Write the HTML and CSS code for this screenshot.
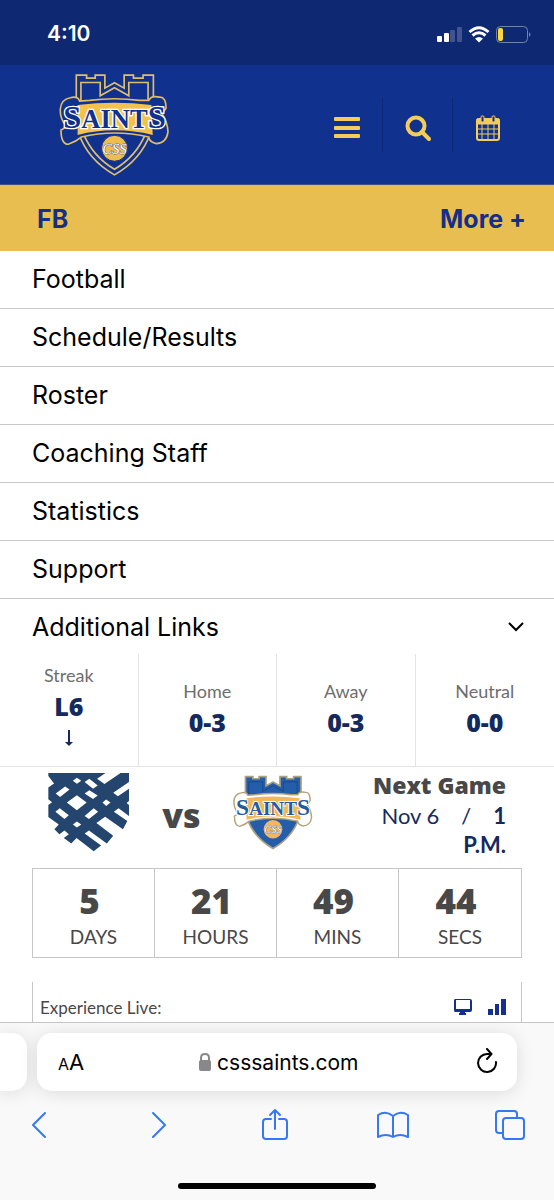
FILE: index.html
```
<!DOCTYPE html>
<html lang="en">
<head>
    <meta charset="UTF-8">
    <meta name="viewport" content="width=device-width, initial-scale=1.0">
    <title>Football - CSS Saints</title>
    <link rel="stylesheet" href="styles.css">
</head>
<body>

    <div class="status-bar">
        <span class="clock">4:10</span>
        <svg class="status-icons" width="96" height="20" viewBox="0 0 96 20">
            <rect x="1" y="12" width="5" height="6" rx="1" fill="#fff"/>
            <rect x="8" y="9" width="5" height="9" rx="1" fill="#fff"/>
            <rect x="14" y="6" width="5" height="12" rx="1" fill="#42548f"/>
            <rect x="21" y="3" width="5" height="15" rx="1" fill="#42548f"/>
            <path d="M33.500 8 Q43 -0.500 52.500 8 M36.500 11.500 Q43 6 49.500 11.500" fill="none" stroke="#fff" stroke-width="3"/>
            <path d="M39 14.500 Q43 11.500 47 14.500 L43 18.500 Z" fill="#fff"/>
            <rect x="60.500" y="2.500" width="31" height="16" rx="4" fill="none" stroke="#7482b0"/>
            <rect x="62" y="4" width="5" height="13" rx="2" fill="#fbd73c"/>
            <path d="M93 8 Q96 10.500 93 13 Z" fill="#7482b0"/>
        </svg>
    </div>

    <header class="site-header">
        <a href="#" class="logo" aria-label="Saints home">
            <svg width="111" height="104" viewBox="28 24 334 312">
                <path d="M80 110 V30 H111 V39 H137 V30 H166 V69 L195 53 L224 69 V30 H252 V39 H281 V30 H312 V110 M94 110 V52 H152 V92 L195 68 L238 92 V52 H296 V110 M87 205 Q115 285 195 330 Q275 285 303 205 M101 205 Q130 275 195 313 Q260 275 289 205" fill="none" stroke="#dfbf6f" stroke-width="5"/>
                <path d="M62 98 Q84 92 90 108 L120 106 Q195 96 270 106 L298 106 Q305 90 330 96 Q350 94 350 130 Q342 142 338 146 Q354 170 356 200 Q352 235 320 236 Q300 232 298 216 Q195 192 96 216 Q80 230 56 238 Q34 238 34 195 Q48 188 50 184 Q30 160 32 132 Q34 103 62 98 Z" fill="#11318f" stroke="#e0bd64" stroke-width="5"/>
                <path d="M84 120 Q195 106 306 120 L310 210 Q195 182 84 210 Z" fill="#f2c14e"/>
                <text class="logo-word" x="195" y="190" fill="#11318f" stroke="#fff"><tspan class="big">S</tspan>AINT<tspan class="big">S</tspan></text>
                <circle cx="195" cy="250" r="39" fill="#efbd4e" stroke="#11318f" stroke-width="3"/>
                <text class="logo-css" x="195" y="266" fill="#fff" stroke="#52699f">CSS</text>
            </svg>
        </a>
        <div class="header-buttons">
            <button type="button" aria-label="Menu">
                <svg width="28" height="28" viewBox="0 0 28 28" fill="#f5cc5c">
                    <rect x="1" y="3" width="26" height="4" rx="1"/>
                    <rect x="1" y="12" width="26" height="4" rx="1"/>
                    <rect x="1" y="20" width="26" height="4" rx="1"/>
                </svg>
            </button>
            <button type="button" aria-label="Search">
                <svg width="28" height="28" viewBox="0 0 28 28" fill="none" stroke="#f5cc5c" stroke-width="4">
                    <circle cx="12" cy="12" r="8.500"/>
                    <path d="M18 18 L25 25" stroke-linecap="round"/>
                </svg>
            </button>
            <button type="button" aria-label="Calendar">
                <svg width="28" height="28" viewBox="0 0 28 28" fill="none" stroke="#f5cc5c">
                    <rect x="3" y="5" width="22" height="21" rx="2" stroke-width="2"/>
                    <path d="M3 5 H25 V10 H3 Z" fill="#f5cc5c"/>
                    <path d="M8 10 V26 M14 10 V26 M20 10 V26 M3 15 H25 M3 20 H25" stroke-width="1"/>
                    <rect x="7" y="2" width="3" height="6" rx="1" fill="#11318f"/>
                    <rect x="18" y="2" width="3" height="6" rx="1" fill="#11318f"/>
                </svg>
            </button>
        </div>
    </header>

    <div class="sport-bar">
        <span>FB</span>
        <button type="button">More +</button>
    </div>

    <nav class="sport-nav">
        <a href="#">Football</a>
        <a href="#">Schedule/Results</a>
        <a href="#">Roster</a>
        <a href="#">Coaching Staff</a>
        <a href="#">Statistics</a>
        <a href="#">Support</a>
        <button type="button" class="additional">
            Additional Links
            <svg width="16" height="16" viewBox="0 0 16 16" fill="none" stroke="#000" stroke-width="2">
                <path d="M1 4 L8 11 L15 4"/>
            </svg>
        </button>
    </nav>

    <main>
        <section class="records">
            <div class="record">
                <span>Streak</span>
                <strong>L6</strong>
                <svg width="10" height="32" viewBox="0 0 10 32">
                    <path d="M4 8 H6 V20 H9 L5 24 L1 20 H4 Z" fill="#14295c"/>
                </svg>
            </div>
            <div class="record"><span>Home</span><strong>0-3</strong></div>
            <div class="record"><span>Away</span><strong>0-3</strong></div>
            <div class="record"><span>Neutral</span><strong>0-0</strong></div>
        </section>

        <section class="next-game">
            <div class="teams">
                <!-- opponent -->
                <svg width="82" height="80" viewBox="54 22 244 238">
                    <path d="M55 25 H225 L200 42 L222 58 L270 25 H295 V52 L248 84 L262 94 L295 72 V108 L288 114 L295 120 V153 L264 130 L250 140 L290 168 L277 192 L224 155 L198 174 L248 212 L229 235 L176 196 L163 205 L212 241 L190 258 L139 218 L123 235 L101 218 L116 207 L103 196 L88 207 L73 192 L86 178 L55 156 V120 L66 112 L55 103 V68 L72 56 L55 34 Z" fill="#24466e"/>
                    <path d="M128 48 L140 39 L153 48 L140 57 Z M163 52 L177 42 L202 62 L188 72 Z M77 86 L105 65 L118 74 L90 96 Z M110 113 L140 91 L169 113 L140 136 Z M163 86 L177 76 L202 92 L188 102 Z M216 113 L227 104 L240 113 L227 123 Z M76 140 L89 130 L116 151 L103 162 Z M163 153 L190 130 L203 140 L176 162 Z M128 178 L140 169 L153 178 L140 187 Z" fill="#fff"/>
                </svg>
                <span class="vs">vs</span>
                <svg width="80" height="75" viewBox="28 24 334 312">
                    <path d="M80 110 V30 H111 V39 H137 V30 H166 V69 L195 53 L224 69 V30 H252 V39 H281 V30 H312 V110 L303 205 Q275 285 195 330 Q115 285 87 205 Z" fill="#245da9" stroke="#aaa181" stroke-width="7"/>
                    <path d="M94 110 V52 H152 V92 L195 68 L238 92 V52 H296 V110" fill="none" stroke="#17417f" stroke-width="3"/>
                    <path d="M62 98 Q84 92 90 108 L120 106 Q195 96 270 106 L298 106 Q305 90 330 96 Q350 94 350 130 Q342 142 338 146 Q354 170 356 200 Q352 235 320 236 Q300 232 298 216 Q195 192 96 216 Q80 230 56 238 Q34 238 34 195 Q48 188 50 184 Q30 160 32 132 Q34 103 62 98 Z" fill="#fff" stroke="#b5a276" stroke-width="6"/>
                    <path d="M84 120 Q195 106 306 120 L310 210 Q195 182 84 210 Z" fill="#f3b65b"/>
                    <text class="logo-word" x="195" y="190" fill="#245b9f" stroke="#fff"><tspan class="big">S</tspan>AINT<tspan class="big">S</tspan></text>
                    <circle cx="195" cy="250" r="39" fill="#f0b860"/>
                    <text class="logo-css" x="195" y="266" fill="#fff" stroke="#5a7199">CSS</text>
                </svg>
            </div>
            <div class="game-info">
                <h2>Next Game</h2>
                <p><span>Nov 6</span><span class="slash">/</span><strong>1<br>P.M.</strong></p>
            </div>
        </section>

        <section class="countdown">
            <div><strong>5</strong><span>DAYS</span></div>
            <div><strong>21</strong><span>HOURS</span></div>
            <div><strong>49</strong><span>MINS</span></div>
            <div><strong>44</strong><span>SECS</span></div>
        </section>

        <section class="experience">
            <span>Experience Live:</span>
            <a href="#" aria-label="Watch">
                <svg width="20" height="18" viewBox="0 0 20 18" fill="#142f91">
                    <path fill-rule="evenodd" d="M2 1 H17 Q19 1 19 3 V12 Q19 14 17 14 H12 V15 H13 V17 H6 V15 H7 V14 H2 Q1 14 1 12 V3 Q1 1 2 1 Z M3 2 V11 H17 V2 Z"/>
                </svg>
            </a>
            <a href="#" aria-label="Live stats">
                <svg width="20" height="18" viewBox="0 0 20 18" fill="#142f91">
                    <path d="M1 11 H6 V17 H1 Z M8 6 H12 V17 H8 Z M14 1 H19 V17 H14 Z"/>
                </svg>
            </a>
        </section>
    </main>

    <footer class="browser-bar">
        <div class="tabs">
            <div class="prev-tab"></div>
            <form class="address">
                <button type="button" aria-label="Page settings" class="text-size"><small>A</small>A</button>
                <label>
                    <svg width="14" height="20" viewBox="0 0 14 20">
                        <path d="M3 9 V6 Q3 2 7 2 Q11 2 11 6 V9" fill="none" stroke="#88888a" stroke-width="2"/>
                        <rect x="1" y="8" width="12" height="11" rx="2" fill="#88888a"/>
                    </svg>
                    <input type="text" value="csssaints.com" aria-label="Address">
                </label>
                <button type="button" aria-label="Reload">
                    <svg width="24" height="28" viewBox="0 0 24 28" fill="none" stroke="#000" stroke-width="2" stroke-linecap="round">
                        <path d="M21 14 A9 9 0 1 1 12 6 H16 M12 1 L16.500 6 L12 11"/>
                    </svg>
                </button>
            </form>
        </div>
        <div class="toolbar">
            <button type="button" aria-label="Back">
                <svg width="32" height="34" viewBox="0 0 32 34"><path d="M21 5 L9 17 L21 29"/></svg>
            </button>
            <button type="button" aria-label="Forward">
                <svg width="32" height="34" viewBox="0 0 32 34"><path d="M11 5 L23 17 L11 29"/></svg>
            </button>
            <button type="button" aria-label="Share">
                <svg width="32" height="34" viewBox="0 0 32 34"><path d="M12 11 H7 Q4 11 4 14 V28 Q4 31 7 31 H25 Q28 31 28 28 V14 Q28 11 25 11 H20 M16 21 V2 M11 7 L16 2 L21 7"/></svg>
            </button>
            <button type="button" aria-label="Bookmarks">
                <svg width="32" height="34" viewBox="0 0 32 34"><path d="M16 8 Q9 2 1 7 V29 Q9 25 16 29 Q23 25 31 29 V7 Q23 2 16 8 V29"/></svg>
            </button>
            <button type="button" aria-label="Tabs">
                <svg width="32" height="34" viewBox="0 0 32 34"><path d="M9 25 H5 Q2 25 2 22 V6 Q2 3 5 3 H20 Q23 3 23 6 V9"/><rect x="9" y="10" width="21" height="21" rx="3"/></svg>
            </button>
        </div>
        <div class="home-indicator"></div>
    </footer>

</body>
</html>
```
FILE: styles.css
```
* {
    box-sizing: border-box;
}
body {
    margin: 0;
    background: #fff;
    font-family: Lato, sans-serif;
}
button {
    background: none;
    border: none;
    padding: 0;
    font: inherit;
    color: inherit;
    cursor: pointer;
}
svg {
    display: block;
}
a {
    color: inherit;
    text-decoration: none;
}

/* phone status bar */
.status-bar {
    display: flex;
    justify-content: space-between;
    align-items: center;
    height: 65px;
    padding: 2px 22px 0 47px;
    background: #0e2872;
    color: #fff;
}
.clock {
    font: 600 21px Inter, sans-serif;
}

/* header */
.site-header {
    display: flex;
    justify-content: space-between;
    align-items: center;
    height: 120px;
    padding: 0 32px 0 59px;
    background: #11318f;
    border-bottom: 1px solid #44507a;
}
.logo-word {
    font-family: "Liberation Serif", serif;
    font-weight: bold;
    font-size: 80px;
    text-anchor: middle;
    stroke-width: 8px;
    paint-order: stroke;
}
.logo-word .big {
    font-size: 98px;
}
.logo-css {
    font-family: "Liberation Serif", serif;
    font-style: italic;
    font-size: 44px;
    text-anchor: middle;
    stroke-width: 3px;
    paint-order: stroke;
}
.header-buttons {
    display: flex;
}
.header-buttons button {
    display: flex;
    justify-content: center;
    align-items: center;
    width: 70px;
    height: 54px;
    padding-top: 6px;
}
.header-buttons button + button {
    border-left: 1px solid #0c2678;
}

/* sport menu */
.sport-bar {
    display: flex;
    justify-content: space-between;
    align-items: center;
    height: 66px;
    padding: 2px 28px 0 37px;
    background: #e7be4f;
    color: #142f88;
    font: 700 25px Inter, sans-serif;
}
.sport-nav {
    font: 400 25px Inter, sans-serif;
    color: #000;
}
.sport-nav a {
    display: block;
    padding: 0 32px;
    line-height: 57px;
    border-bottom: 1px solid #c8c9ca;
}
.sport-nav .additional {
    display: flex;
    justify-content: space-between;
    align-items: center;
    width: 100%;
    height: 55px;
    padding: 0 30px 0 32px;
}

/* season records */
.records {
    display: grid;
    grid-template-columns: repeat(4, 1fr);
    height: 113px;
    border-bottom: 1px solid #e4e4e6;
}
.record {
    display: flex;
    flex-direction: column;
    justify-content: center;
    align-items: center;
    padding-bottom: 6px;
    line-height: 31px;
    border-right: 1px solid #e4e4e6;
}
.record:last-child {
    border-right: none;
}
.record span {
    font-size: 18px;
    color: #6d6d6d;
}
.record strong {
    font-family: "Open Sans", sans-serif;
    font-weight: 800;
    font-size: 25px;
    color: #14295c;
}

/* next game */
.next-game {
    display: flex;
    justify-content: space-between;
    padding: 2px 48px 9px;
}
.teams {
    display: flex;
    align-items: center;
    padding-bottom: 4px;
}
.vs {
    width: 103px;
    padding-top: 6px;
    text-align: center;
    font: 800 34px/40px "Open Sans", sans-serif;
    color: #484848;
}
.game-info {
    text-align: right;
}
.game-info h2 {
    margin: 0;
    font: 800 23px/32px "Open Sans", sans-serif;
    color: #484848;
}
.game-info p {
    margin: 0;
    font-size: 22px;
    line-height: 29px;
    color: #14295c;
}
.slash {
    margin: 0 22px;
}
.countdown {
    display: grid;
    grid-template-columns: repeat(4, 1fr);
    margin: 0 32px;
    border: 1px solid #c6c6c6;
    color: #484848;
}
.countdown div {
    display: flex;
    flex-direction: column;
    align-items: center;
    padding: 13px 0 4px;
    border-right: 1px solid #c6c6c6;
}
.countdown div:last-child {
    border-right: none;
}
.countdown strong {
    padding-right: 8px;
    font: 800 35px/38px "Open Sans", sans-serif;
}
.countdown span {
    font-size: 19px;
    line-height: 33px;
}
.experience {
    display: flex;
    align-items: center;
    gap: 14px;
    height: 40px;
    margin: 24px 32px 0;
    padding: 10px 14px 0 7px;
    border: solid #c6c6c6;
    border-width: 0 1px;
    font-size: 17px;
    color: #484848;
}
.experience span {
    margin-right: auto;
}

/* browser controls */
.browser-bar {
    height: 178px;
    padding-top: 10px;
    background: #f9f9fa;
    border-top: 1px solid #c4c4c7;
    overflow: hidden;
}
.tabs {
    display: flex;
    gap: 10px;
    padding-right: 37px;
}
.prev-tab {
    width: 27px;
    background: #fff;
    border-radius: 0 15px 15px 0;
    box-shadow: 0 2px 18px rgba(0, 0, 0, 0.12);
}
.address {
    flex: 1;
    display: flex;
    justify-content: space-between;
    align-items: center;
    height: 58px;
    padding: 0 18px 0 21px;
    background: #fff;
    border-radius: 15px;
    box-shadow: 0 2px 18px rgba(0, 0, 0, 0.12);
    font: 400 21px Inter, sans-serif;
    color: #000;
}
.text-size {
    font-size: 22px;
}
.text-size small {
    font-size: 16px;
}
.address label {
    display: flex;
    align-items: center;
    gap: 5px;
}
.address input {
    width: 144px;
    padding: 0;
    border: none;
    background: none;
    font: inherit;
    color: inherit;
}
.toolbar {
    display: flex;
    justify-content: space-between;
    padding: 17px 28px 0 24px;
}
.toolbar svg {
    fill: none;
    stroke: #3478f6;
    stroke-width: 2px;
    stroke-linecap: round;
    stroke-linejoin: round;
}
.home-indicator {
    width: 198px;
    height: 6px;
    margin: 41px auto 0;
    border-radius: 3px;
    background: #000;
}
```
